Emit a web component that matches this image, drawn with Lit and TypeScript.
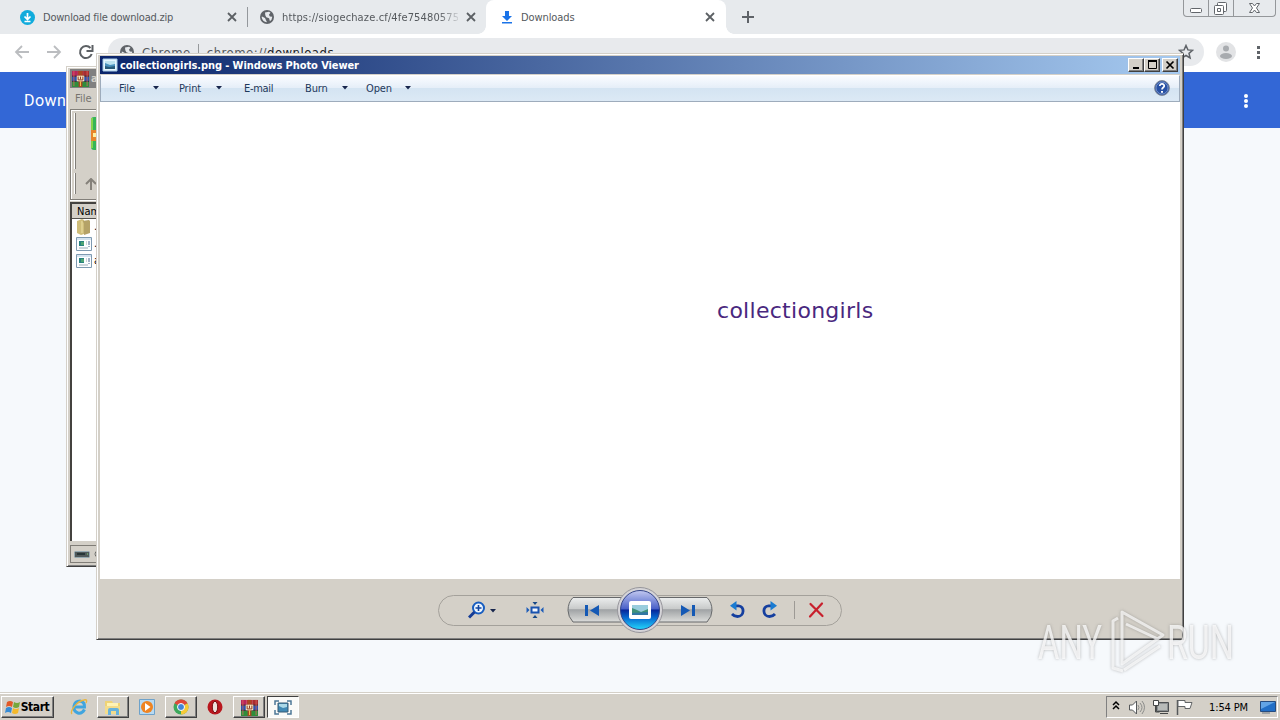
import {LitElement, html, svg, css} from 'lit';
import {customElement, property} from 'lit/decorators.js';

const close = html`<svg width="10" height="10"><path d="M1 1l8 8M9 1l-8 8" stroke="#5c6064" stroke-width="1.8" fill="none"/></svg>`;

const globe = html`<svg width="14" height="14" viewBox="0 0 14 14">
  <circle cx="7" cy="7" r="7" fill="#5f6368"/>
  <path d="M2 6.5L5 8l1 2.2 1 2C4 12 2 10 1.6 7zM5 2.5l4-.7 1.5 1-1.6 2 1 1.8 2.4.2-.8 3-1.6 1.5-.8-3-2.8-1-1-2z" fill="#e7eaed"/>
</svg>`;

const books = html`<svg width="17" height="17" viewBox="0 0 18 18">
  <path d="M0 1h6v6H0z" fill="#b8245c"/><path d="M6 1h6v6H6z" fill="#c62836"/><path d="M12 1h6v6h-6z" fill="#a82c30"/>
  <path d="M0 7h18v5H0z" fill="#2d52ae"/><path d="M0 12h18v6H0z" fill="#2e8d3c"/>
  <path d="M0 6.500h18M0 12h18" stroke="#332632"/><path d="M2 1v16M16 1v16" stroke="#e06a5d" stroke-width=".8"/>
  <path d="M7 1h4v17H7z" fill="#a74822"/><path d="M5 6h8v6H5z" fill="#f5e3bd"/>
  <path d="M6.500 7v3.500h5V7M9 7v3" stroke="#8a3320" fill="none"/><path d="M9 12v5" stroke="#f5c64e"/>
</svg>`;

const exe = html`<svg width="16" height="14" viewBox="0 0 16 14">
  <path d="M.5.5h15v13H.5z" fill="#fdfeff" stroke="#7e9ab1"/><path d="M1 1h14v2H1z" fill="#d5e4f0"/>
  <path d="M3 4h5v5H3z" fill="#27817f"/><path d="M5 5h3v3H5z" fill="#4ea572"/>
  <path d="M10 5h1M10 7h1M3 11h9" stroke="#9cacb9"/><path d="M13 4v4M13 9v1" stroke="#46658f"/>
</svg>`;

const photo = html`<svg width="16" height="14" viewBox="0 0 16 14">
  <path d="M1 1h14v12H1z" fill="#e7f6ff" stroke="#a5c9e5"/><path d="M3 3h10v8H3z" fill="#4a91bd"/>
  <path d="M3 3h10v3L8 7 3 5z" fill="#bce1ef"/><path d="M3 8l4 1 6-1v3H3z" fill="#285978"/>
</svg>`;

const caret = html`<svg class="caret" width="6" height="4" viewBox="0 0 6 4"><path d="M0 0h6L3 3.5z" fill="#18264d"/></svg>`;

const base = css`
:host {
  box-sizing: border-box;
  font: 11px "DejaVu Sans Condensed", "DejaVu Sans", sans-serif;
  font-stretch: condensed;
}

svg {
  display: block;
  flex: none;
}
`;

const frame = css`
:host {
  display: flex;
  flex-direction: column;
  border: 1px solid #d4d0c8;
  border-right-color: #404040;
  border-bottom-color: #404040;
  padding: 2px 3px 3px 2px;
  background: #d4d0c8;
  box-shadow: inset 1px 1px #fff, inset -1px -1px #808080;
  color: #000;
}
`;

@customElement('chrome-window')
export class ChromeWindow extends LitElement {
  static styles = [base, css`
:host {
  display: block;
  color: #55595d;
}

.tabs {
  height: 34px;
  display: flex;
  background: #e7eaed;
}

.tab {
  display: flex;
  box-sizing: border-box;
  align-items: center;
  height: 34px;
  width: 238px;
  padding-left: 12px;
}

.tab span {
  flex: none;
  width: 176px;
  margin: 0 8px;
  overflow: hidden;
  white-space: nowrap;
}

.tab.first {
  width: 240px;
  padding-left: 20px;
}

.first span {
  width: 178px;
  margin-right: 6px;
  letter-spacing: -0.22px;
}

.second span {
  letter-spacing: 0.14px;
  mask-image: linear-gradient(90deg, #000 156px, transparent 180px);
}

.active {
  position: relative;
  padding-left: 15px;
  border-radius: 8px 8px 0 0;
  background: #fff;
}

.tab.active {
  width: 240px;
}

.active span {
  width: 178px;
  margin-right: 6px;
  letter-spacing: -0.1px;
}

.active::before,
.active::after {
  content: "";
  position: absolute;
  bottom: 0;
  left: -8px;
  width: 8px;
  height: 8px;
  background: radial-gradient(circle at 0 0, transparent 7.5px, #fff 8px);
}

.active::after {
  left: auto;
  right: -8px;
  background: radial-gradient(circle at 100% 0, transparent 7.5px, #fff 8px);
}

.rule {
  width: 1px;
  height: 20px;
  margin: 7px 0 0 7px;
  background: #94989c;
}

.plus {
  margin: 11px 0 0 16px;
}

.buttons {
  box-sizing: border-box;
  width: 93px;
  height: 17px;
  margin-left: auto;
  margin-right: 4px;
  border: 1px solid #94979a;
  border-top: 0;
  border-radius: 0 0 4px 4px;
}

.bar {
  display: flex;
  align-items: center;
  box-sizing: border-box;
  height: 38px;
  padding: 0 14px 2px 14px;
  background: #fff;
}

.omnibox {
  display: flex;
  align-items: center;
  box-sizing: border-box;
  flex: 1;
  height: 28px;
  margin-left: 14px;
  padding: 0 10px 0 12px;
  border-radius: 14px;
  background: #e8eaed;
  font-size: 13px;
  letter-spacing: 0.48px;
}

.omnibox .site {
  margin-left: 8px;
}

.omnibox i {
  width: 1px;
  height: 16px;
  margin: 0 8px 0 7px;
  background: #96999c;
}

.omnibox b {
  color: #202124;
  font-weight: normal;
}

.star {
  margin-left: auto;
}

.header {
  display: flex;
  align-items: center;
  justify-content: space-between;
  height: 56px;
  padding: 1px 32px 0 24px;
  box-sizing: border-box;
  background: #3367d6;
  color: #fff;
  font: 16px Roboto, sans-serif;
  letter-spacing: 0.45px;
}
`];

  protected render() {
    return html`
      <div class="tabs">
        <div class="tab first">
          <svg width="15" height="15"><circle cx="7.5" cy="7.5" r="7.5" fill="#10abdc"/><path d="M7.5 3v6M4.5 6.500l3 3 3-3M4.500 11.500h6" stroke="#fff" stroke-width="1.7" fill="none"/></svg>
          <span>Download file download.zip</span>${close}
        </div>
        <div class="rule"></div>
        <div class="tab second">
          ${globe}<span>https://siogechaze.cf/4fe7548057545</span>${close}
        </div>
        <div class="tab active">
          <svg width="12" height="13"><path d="M4 0h4v5h3L6 10 1 5h3zM1 11h10v1.5H1z" fill="#1a73e8"/></svg>
          <span>Downloads</span>${close}
        </div>
        <svg class="plus" width="12" height="12"><path d="M6 0v12M0 6h12" stroke="#5f6368" stroke-width="2"/></svg>
        <div class="buttons">
          <svg width="91" height="16" fill="#fff" stroke="#62666b">
            <path d="M24.5 0v16M49.5 0v16" stroke="#94979a"/>
            <rect x="6.5" y="8.5" width="11" height="4" rx="1"/>
            <rect x="33.5" y="2.5" width="9" height="9" rx="1"/><rect x="30.5" y="5.5" width="9" height="9" rx="1"/><path d="M33.500 8.500h3v3h-3z"/>
            <path d="M65.5 3.5h3l2 2.500 2-2.500h3l-3 4.500 3 4.500h-3l-2-2.500-2 2.500h-3l3-4.500z"/>
          </svg>
        </div>
      </div>
      <div class="bar">
        <svg width="80" height="20" fill="none" stroke="#bbbdc0" stroke-width="1.8">
          <path d="M15 10H2M8 4l-6 6 6 6M33 10h13M40 4l6 6-6 6"/>
          <path d="M76.5 6a6 6 0 1 0 1.200 6M78.500 3v6h-6" stroke="#5c6064" stroke-width="2"/>
        </svg>
        <div class="omnibox">
          ${globe}<span class="site">Chrome</span><i></i><span>chrome://<b>downloads</b></span>
          <svg class="star" width="16" height="16"><path d="M8 1.500l1.900 4.400 4.700.4-3.600 3 1.100 4.700L8 11.500 3.900 14 5 9.300l-3.600-3 4.700-.4z" fill="none" stroke="#5f6368" stroke-width="1.5"/></svg>
        </div>
        <svg width="62" height="20">
          <circle cx="22" cy="10" r="10" fill="#e2e3e5"/><circle cx="22" cy="6.5" r="3" fill="#a8abaf"/><ellipse cx="22" cy="14" rx="6" ry="3" fill="#a8abaf"/>
          <path d="M53 4h3v3h-3zM53 9h3v3h-3zM53 14h3v3h-3z" fill="#5f6368"/>
        </svg>
      </div>
      <div class="header"><span>Downloads</span><svg width="4" height="14" fill="#fff"><circle cx="2" cy="2" r="2"/><circle cx="2" cy="7" r="2"/><circle cx="2" cy="12" r="2"/></svg></div>
    `;
  }
}

@customElement('archive-window')
export class ArchiveWindow extends LitElement {
  static styles = [base, frame, css`
.title {
  display: flex;
  align-items: center;
  gap: 2px;
  height: 19px;
  margin-left: 1px;
  padding-left: 2px;
  background: #808080;
  color: #d4d0c8;
  font-weight: bold;
}

.menu {
  height: 21px;
  padding: 4px 0 0 6px;
  box-sizing: border-box;
  color: #77746f;
}

.tools {
  box-sizing: border-box;
  display: flex;
  height: 91px;
  margin-left: 1px;
  padding: 3px 0 0 3px;
  border: solid #827f79;
  border-width: 1px 0 1px 1px;
  box-shadow: inset 1px 1px #fff, 0 1px #fff;
}

.grips {
  display: flex;
  flex-direction: column;
  gap: 4px;
}

.grip {
  width: 1px;
  height: 56px;
  border-left: 1px solid #fff;
  background: #807d77;
}

.grip.low {
  height: 21px;
}

.icons {
  display: flex;
  flex-direction: column;
  gap: 27px;
  margin-left: 9px;
  padding-top: 2px;
}

.list {
  flex: 1;
  margin: 2px 0 0 1px;
  border: solid #44423f;
  border-width: 2px 0 0 2px;
  background: #fff;
}

.column {
  height: 13px;
  padding: 1px 0 0 5px;
  border-bottom: 1px solid #55534f;
  background: #d4d0c8;
}

.file {
  display: flex;
  align-items: center;
  height: 17px;
  padding-left: 4px;
  gap: 2px;
}

.folder {
  margin-top: -1px;
}

.status {
  display: flex;
  align-items: center;
  box-sizing: border-box;
  height: 18px;
  margin: 4px 0 0 1px;
  padding-left: 3px;
  gap: 3px;
  border: 1px solid #807d77;
}
`];

  protected render() {
    return html`
      <div class="title">${books}archive</div>
      <div class="menu">File</div>
      <div class="tools">
        <div class="grips"><div class="grip"></div><div class="grip low"></div></div>
        <div class="icons">
          <svg width="24" height="36"><rect x="6" y="2" width="14" height="33" rx="3" fill="#35b557"/><path d="M6 3h2v30H6z" fill="#86d34d"/><path d="M6 15h14v11H6z" fill="#e8862a"/><path d="M8 18h9v4H8z" fill="#fff1a0"/></svg>
          <svg width="12" height="12"><path d="M6 12V2M1 6l5-5 5 5" fill="none" stroke="#85817a" stroke-width="2"/></svg>
        </div>
      </div>
      <div class="list">
        <div class="column">Name</div>
        <div class="file folder"><svg width="16" height="16"><path d="M1 2l5-2 2 1v14l-3 1-4-2z" fill="#cfbd79"/><path d="M6 2l7-1 1 1v12l-6 2V4z" fill="#b5a267"/><path d="M6 2v12" stroke="#eee0a4"/></svg>..</div>
        <div class="file">${exe}.exe</div>
        <div class="file">${exe}archive</div>
      </div>
      <div class="status">
        <svg width="16" height="7"><rect x=".5" y=".5" width="15" height="6" rx="1" fill="#50595b" stroke="#95aab3"/><path d="M3 3h8" stroke="#273537" stroke-width="2"/><path d="M13 3h1" stroke="#80df75"/></svg>
        <svg width="10" height="9"><circle cx="5" cy="4" r="3" fill="#eee" stroke="#6c6c68"/></svg>
      </div>
    `;
  }
}

@customElement('tool-glyph')
export class ToolGlyph extends LitElement {
  @property() name = '';

  static styles = css`
:host, svg {
  display: block;
}
`;

  protected render() {
    return html`<svg width="18" height="18" viewBox="0 0 18 18">${this.glyph()}</svg>`;
  }

  private glyph() {
    switch (this.name) {
      case 'zoom':
        return svg`<circle cx="10.500" cy="7" r="5.500" fill="#edf6ff" stroke="#175dc0" stroke-width="2"/><path d="M6.500 11L1 16.500" stroke="#153c96" stroke-width="3"/><path d="M7.500 7h6M10.500 4v6" stroke="#1245a0" stroke-width="1.6"/>`;
      case 'fit':
        return svg`<path d="M5.5 6.500h7v5h-7z" fill="#f2f7ff" stroke="#1953af" stroke-width="2"/><path d="M6.500 1h5L9 4zM6.500 17h5L9 14z" fill="#164887"/><path d="M.5 6v6l3-3zM17.500 6v6l-3-3z" fill="#1d5cb9"/>`;
      case 'left':
      case 'right':
        return svg`<g transform=${this.name === 'right' ? 'translate(18 0) scale(-1 1)' : ''}><path d="M7 4.800h3.500c6.500.2 6 10.700-1 10.700-2.500 0-4-.8-5.500-2.500" fill="none" stroke="#153f9f" stroke-width="2.8"/><path d="M8.500 0v9.500L2 4.700z" fill="#197bd1"/></g>`;
      default:
        return svg`<path d="M3.500 3l12 12M15 2.500L3 15.500" stroke="#c8202d" stroke-width="2.2" stroke-linecap="round"/>`;
    }
  }
}

@customElement('photo-viewer')
export class PhotoViewer extends LitElement {
  static styles = [base, frame, css`
.title {
  display: flex;
  align-items: center;
  flex: none;
  height: 18px;
  margin: 0 0 1px 1px;
  padding: 0 2px;
  background: linear-gradient(90deg, #0a246a, #a6caf0);
  color: #fff;
  font-weight: bold;
  letter-spacing: -0.09px;
}

.title span {
  margin: 0 auto 0 2px;
}

.cap {
  display: flex;
  align-items: center;
  justify-content: center;
  box-sizing: border-box;
  width: 16px;
  height: 14px;
  border: 1px solid #fff;
  border-right-color: #404040;
  border-bottom-color: #404040;
  background: #d4d0c8;
  box-shadow: inset -1px -1px #808080;
}

.cap.close {
  margin-left: 2px;
}

.menu {
  display: flex;
  align-items: center;
  flex: none;
  box-sizing: border-box;
  height: 27px;
  margin-left: 1px;
  padding: 0 9px 1px 18px;
  border: 1px solid #9eacbc;
  border-top-color: #fff;
  background: linear-gradient(#fafcff, #e5eef8 48%, #d4e4f2 50%, #dce9f5);
  color: #1e395b;
}

.menu span {
  width: 34px;
  letter-spacing: -0.15px;
}

.menu .caret {
  margin-right: 20px;
}

.menu .print,
.menu .burn {
  width: 37px;
}

.menu .email {
  width: 61px;
  margin-left: 2px;
  letter-spacing: -0.3px;
}

.menu .open {
  width: 39px;
  margin-left: -2px;
}

.help {
  margin-left: auto;
}

.canvas {
  flex: 1;
  margin-left: 1px;
  box-sizing: border-box;
  padding: 196px 0 0 617px;
  background: #fff;
  color: #49277e;
  font: 22px "DejaVu Sans", sans-serif;
  letter-spacing: 0.28px;
}

.controls {
  display: flex;
  justify-content: center;
  flex: none;
  height: 57px;
  padding-top: 16px;
  box-sizing: border-box;
}

.pill {
  display: flex;
  align-items: center;
  box-sizing: border-box;
  width: 404px;
  height: 31px;
  padding: 0 0 1px 29px;
  border: 1px solid #a4a19b;
  border-radius: 16px;
}

.pill .caret {
  margin: 2px 30px 0 4px;
}

.nav {
  margin: 0 15px 0 23px;
}

.turn {
  margin-left: 15px;
}

.cut {
  width: 1px;
  height: 18px;
  margin: 0 12px 0 15px;
  background: #9d9a95;
}
`];

  protected render() {
    return html`
      <div class="title">
        ${photo}<span>collectiongirls.png - Windows Photo Viewer</span>
        <div class="cap"><svg width="11" height="10"><path d="M2 8h6" stroke="#000" stroke-width="2"/></svg></div>
        <div class="cap"><svg width="11" height="10"><path d="M1.500 1v7.500h8V1" fill="none" stroke="#000"/><path d="M1 0h9v2H1z"/></svg></div>
        <div class="cap close"><svg width="10" height="10"><path d="M1.500 1.500l7 7M8.500 1.500l-7 7" stroke="#000" stroke-width="1.7"/></svg></div>
      </div>
      <div class="menu">
        <span>File</span>${caret}
        <span class="print">Print</span>${caret}
        <span class="email">E-mail</span>
        <span class="burn">Burn</span>${caret}
        <span class="open">Open</span>${caret}
        <svg class="help" width="16" height="16"><circle cx="8" cy="8" r="7.400" fill="#2851a4" stroke="#818894"/><circle cx="8" cy="8" r="6" fill="none" stroke="#a8bddf" stroke-opacity=".6"/><path d="M5.800 6c0-3 4.800-2.600 4.400.2C10 7.600 8 7.500 8 9.500" fill="none" stroke="#fff" stroke-width="1.7"/><path d="M7 11h2v1.700H7z" fill="#fff"/></svg>
      </div>
      <div class="canvas">collectiongirls</div>
      <div class="controls">
        <div class="pill">
          <tool-glyph name="zoom"></tool-glyph>${caret}
          <tool-glyph name="fit"></tool-glyph>
          <svg class="nav" width="146" height="46" viewBox="0 0 146 46">
            <defs>
              <linearGradient id="steel" x2="0" y2="1"><stop stop-color="#eceeee"/><stop offset=".45" stop-color="#c9cbcb"/><stop offset=".5" stop-color="#a0a3a5"/><stop offset="1" stop-color="#dcdddb"/></linearGradient>
              <linearGradient id="ball" x2="0" y2="1"><stop stop-color="#c3c9f1"/><stop offset=".47" stop-color="#4960c8"/><stop offset=".5" stop-color="#06269a"/><stop offset=".72" stop-color="#0871d5"/><stop offset="1" stop-color="#24d8fb"/></linearGradient>
            </defs>
            <path d="M6 10.500h134q5 5 5 13 0 6-5 11.500H6q-5-5.500-5-11.500 0-8 5-13z" fill="url(#steel)" stroke="#66686a"/>
            <circle cx="73" cy="23" r="22.500" fill="#d5d4d8" stroke="#96959b"/>
            <circle cx="73" cy="23" r="19.500" fill="url(#ball)" stroke="#354689"/>
            <rect x="62" y="14" width="22" height="18" rx="2" fill="#fff"/><path d="M65 18h16v10H65z" fill="#99cddd"/><path d="M65 21l5 2 4 2 7-3v6H65z" fill="#3e927b"/><path d="M65 26l16-1v3H65z" fill="#3278a4"/>
            <path d="M18 18h3v11h-3zM32 18v11l-9-5.500zM114 18v11l9-5.500zM125 18h3v11h-3z" fill="#1459b5"/>
          </svg>
          <tool-glyph name="left"></tool-glyph>
          <tool-glyph class="turn" name="right"></tool-glyph>
          <div class="cut"></div>
          <tool-glyph name="delete"></tool-glyph>
        </div>
      </div>
    `;
  }
}

@customElement('task-bar')
export class TaskBar extends LitElement {
  static styles = [base, css`
:host {
  display: flex;
  align-items: flex-start;
  height: 28px;
  padding: 4px 2px 0 1px;
  background: #d4d0c8;
  box-shadow: inset 0 1px #d4d0c8, inset 0 2px #fff;
}

.task {
  display: flex;
  align-items: center;
  justify-content: center;
  box-sizing: border-box;
  width: 34px;
  height: 22px;
}

.raised {
  width: 32px;
  margin: 0 1px;
  border: 1px solid #fff;
  border-right-color: #404040;
  border-bottom-color: #404040;
  box-shadow: inset -1px -1px #808080;
}

.start {
  width: 53px;
  margin: 0 8px 0 0;
  padding-right: 2px;
  font-weight: bold;
  font-size: 12px;
  letter-spacing: -0.4px;
}

.pressed {
  width: 32px;
  margin-left: 1px;
  border: 1px solid #404040;
  border-right-color: #fff;
  border-bottom-color: #fff;
  background: #fafaf8;
}

.tray {
  display: flex;
  align-items: center;
  box-sizing: border-box;
  width: 172px;
  height: 22px;
  margin-left: auto;
  padding-left: 5px;
  border: 1px solid #808080;
  border-right-color: #fff;
  border-bottom-color: #fff;
}

.tray span {
  margin: 0 11px 0 15px;
  width: 40px;
  white-space: nowrap;
  letter-spacing: -0.12px;
}
`];

  protected render() {
    return html`
      <div class="task raised start">
        <svg width="17" height="15"><path d="M3 2q3-2 6 0L8 7Q5 5 2 7z" fill="#e25927"/><path d="M10 2q3 2 6 0l-1 5q-3 2-6 0z" fill="#76a83b"/><path d="M2 8q3-2 6 0l-1 5q-3-2-6 0z" fill="#368bd5"/><path d="M9 8q3 2 6 0l-1 5q-3 2-6 0z" fill="#f4b92b"/></svg>Start
      </div>
      <div class="task"><svg width="18" height="18"><path d="M14.500 11.500Q12 16 8 15 3 13 4 8t6-5q5 1 4.500 6H5" fill="none" stroke="#40a5df" stroke-width="3"/><path d="M2 16C-1 14 7 3 14 2q4-1 2 3" fill="none" stroke="#e8b53f" stroke-width="1.4"/></svg></div>
      <div class="task raised"><svg width="18" height="17"><path d="M1 2h7l1 2h7v11H1z" fill="#efd375"/><path d="M3 4h11v5H3z" fill="#fff3b4"/><path d="M1 7h15v8H1z" fill="#f3dc8b"/><path d="M4 16v-5q0-2 2-2h7q2 0 2 2v5h-3v-4H7v4z" fill="#67b2dc"/></svg></div>
      <div class="task"><svg width="16" height="16"><path d="M.5.500h15v15H.500z" fill="#b8daf2" stroke="#6ea2ca"/><circle cx="8" cy="8" r="6" fill="#ef8422"/><path d="M6 4l5.500 4L6 12z" fill="#fff"/></svg></div>
      <div class="task raised"><svg width="16" height="16"><circle cx="8" cy="8" r="7.5" fill="#3da85b"/><path d="M8 8L1.500 4.250A7.500 7.500 0 0 1 14.500 4.250z" fill="#df4739"/><path d="M8 8l6.500-3.750A7.500 7.500 0 0 1 8 15.500z" fill="#f7ca36"/><circle cx="8" cy="8" r="3.500" fill="#4285d8" stroke="#fff"/></svg></div>
      <div class="task"><svg width="16" height="16"><circle cx="8" cy="8" r="7.5" fill="#b9171e"/><ellipse cx="8" cy="8" rx="2.700" ry="5.700" fill="#eee2dc" stroke="#780d13"/></svg></div>
      <div class="task raised">${books}</div>
      <div class="task pressed"><svg width="18" height="15"><path d="M4 3h10v9H4z" fill="#428ab5" stroke="#365b75"/><path d="M5 4h8v3L9 8 5 6z" fill="#abd9e8"/><path d="M1 5V1h4M13 1h4v4M17 10v4h-4M5 14H1v-4" fill="none" stroke="#4e7897" stroke-width="1.5"/></svg></div>
      <div class="tray">
        <svg width="82" height="18" fill="none">
          <path d="M1 7l3-3 3 3M1 11l3-3 3 3" stroke="#000" stroke-width="1.5"/>
          <path d="M17.500 7h3l4-4v13l-4-4h-3z" fill="#fff" stroke="#55585a"/><path d="M26 7q2 2.500 0 5M28 5q4 4.500 0 9M30 3q5 6 0 13" stroke="#8c8d8b"/>
          <path d="M44.500 4.500h12v9h-12z" fill="#8c9092" stroke="#4d5052"/><path d="M46 6h9v6h-9z" fill="#b8bbb9"/><path d="M48 15.500h8M43.500 7v7h4" stroke="#454747"/><path d="M41.500 2.500h5v5h-5z" fill="#fff" stroke="#454747"/>
          <path d="M65.500 2v15" stroke="#55585a" stroke-width="1.5"/><path d="M66 2.500h7v2h7l-2 6h-5v-2h-7z" fill="#fff" stroke="#626567"/>
        </svg>
        <span>1:54 PM</span>
        <svg width="16" height="14"><path d="M.5 1.500h15v10H.500z" fill="#226fc6" stroke="#264c7f"/><path d="M1 2h14L1 9z" fill="#62a4e5"/><path d="M2 13h8" stroke="#6a7783"/></svg>
      </div>
    `;
  }
}

@customElement('app-root')
export class AppRoot extends LitElement {
  static styles = css`
:host {
  display: flex;
  flex-direction: column;
  position: relative;
  width: 1280px;
  height: 720px;
  overflow: hidden;
  background: #f6f9fc;
}

chrome-window {
  flex: 1;
}

archive-window {
  position: absolute;
  left: 66px;
  top: 66px;
  width: 100px;
  height: 501px;
}

photo-viewer {
  position: absolute;
  left: 96px;
  top: 53px;
  width: 1088px;
  height: 587px;
}

.mark {
  position: absolute;
  left: 1030px;
  top: 600px;
  filter: drop-shadow(0 0 1.5px #66666699);
}
`;

  protected render() {
    return html`
      <chrome-window></chrome-window>
      <archive-window></archive-window>
      <photo-viewer></photo-viewer>
      <task-bar></task-bar>
      <svg class="mark" width="250" height="82" fill="none" stroke="#fff" stroke-opacity=".7" stroke-width="3" stroke-linejoin="round">
        <g fill="#fff" fill-opacity=".75" stroke="none" font-family="Roboto" font-size="49">
          <text x="8" y="59" textLength="64" lengthAdjust="spacingAndGlyphs">ANY</text>
          <text x="137" y="59" textLength="67" lengthAdjust="spacingAndGlyphs">RUN</text>
        </g>
        <path d="M92 12l41 23-41 29zM96 24l32 15M94 70l36-24M88 18l-5 3v47l10 3"/>
      </svg>
    `;
  }
}
